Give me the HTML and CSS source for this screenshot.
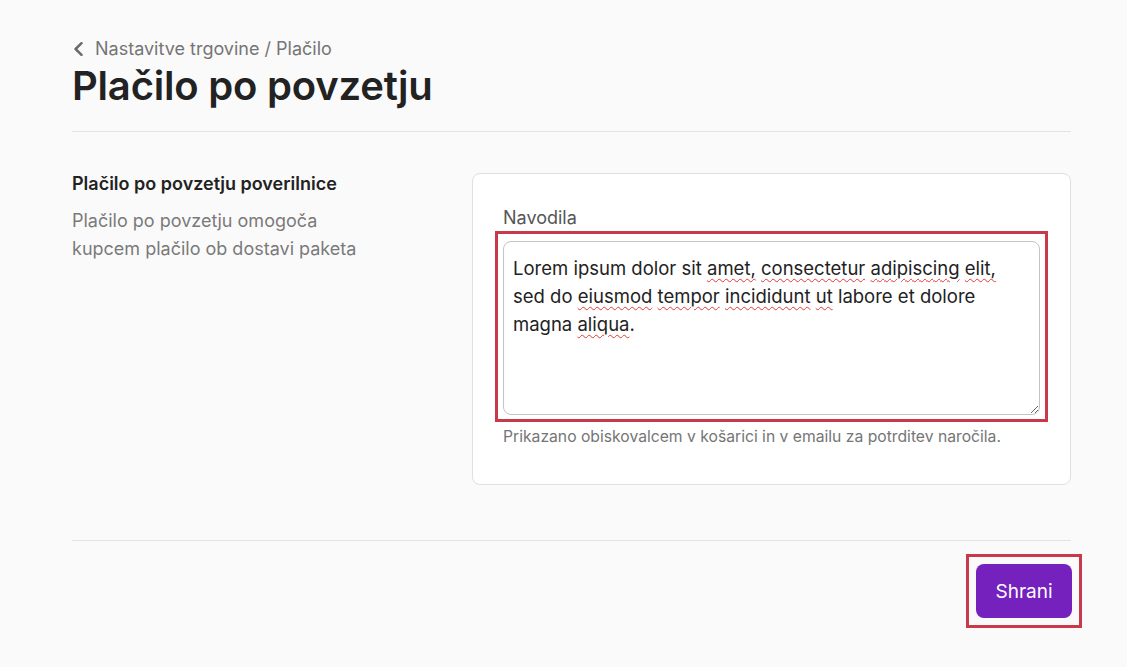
FILE: index.html
```html
<!DOCTYPE html>
<html lang="sl">
<head>
    <meta charset="UTF-8">
    <meta name="viewport" content="width=device-width, initial-scale=1.0">
    <title>Plačilo po povzetju</title>
    <link rel="stylesheet" href="styles.css">
</head>
<body>
    <div class="page">
        <div class="header">
            <a class="breadcrumb" href="#">
                <svg class="chevron" width="11" height="14" viewBox="0 0 11 14"><path d="M8.5 1.2 L2.6 7 L8.5 12.8" fill="none" stroke="#6b6b6b" stroke-width="2.5" stroke-linecap="round" stroke-linejoin="round"/></svg>
                <span>Nastavitve trgovine / Plačilo</span>
            </a>
            <h1 class="title">Plačilo po povzetju</h1>
        </div>

        <div class="section">
            <div class="section-info">
                <h2 class="section-title">Plačilo po povzetju poverilnice</h2>
                <p class="section-desc">Plačilo po povzetju omogoča kupcem plačilo ob dostavi paketa</p>
            </div>
            <div class="card">
                <label class="field-label" for="instructions">Navodila</label>
                <div class="marker">
                    <div class="field-input" id="instructions" role="textbox" contenteditable="true">Lorem ipsum dolor sit <span class="typo">amet,</span> <span class="typo">consectetur</span> <span class="typo">adipiscing</span> <span class="typo">elit,</span> sed do <span class="typo">eiusmod</span> <span class="typo">tempor</span> <span class="typo">incididunt</span> <span class="typo">ut</span> labore et dolore magna <span class="typo">aliqua</span>.</div>
                </div>
                <div class="field-help">Prikazano obiskovalcem v košarici in v emailu za potrditev naročila.</div>
            </div>
        </div>

        <div class="footer">
            <div class="marker marker-btn">
                <button class="save-button">Shrani</button>
            </div>
        </div>
    </div>
</body>
</html>
```

FILE: styles.css
```css
body {
    margin: 0;
    background-color: #fafafa;
    font-family: Inter, "Noto Sans", sans-serif;
    color: #222222;
}
.page {
    width: 999px;
    margin-left: 72px;
    padding-top: 38px;
}
.header {
    padding-bottom: 21px;
    border-bottom: 1px solid #e2e2e2;
}
.breadcrumb {
    display: flex;
    align-items: center;
    gap: 11px;
    color: #757575;
    text-decoration: none;
    font-size: 18px;
    line-height: 22px;
}
.chevron {
    margin-left: 1px;
}
.title {
    margin: 2px 0 0 0;
    font-size: 40px;
    font-weight: 600;
    line-height: 48px;
    color: #222222;
    letter-spacing: -0.2px;
}
.section {
    display: flex;
    justify-content: space-between;
    align-items: flex-start;
    padding: 41px 0 55px 0;
    border-bottom: 1px solid #e2e2e2;
}
.section-info {
    width: 300px;
}
.section-title {
    margin: 0;
    font-size: 18px;
    font-weight: 600;
    line-height: 22px;
    color: #222222;
}
.section-desc {
    margin: 12px 0 0 0;
    font-size: 18px;
    line-height: 28px;
    color: #7a7a7a;
}
.card {
    width: 537px;
    background-color: #ffffff;
    border: 1px solid #e0e0e0;
    border-radius: 8px;
    padding: 33px 30px 38px 30px;
    display: flex;
    flex-direction: column;
}
.field-label {
    font-size: 18px;
    line-height: 22px;
    color: #555555;
    margin-bottom: 2px;
}
.marker {
    border: 3px solid #c8394a;
}
.card .marker {
    margin: 0 -8px;
    padding: 7px 5px 4px 5px;
}
.field-input {
    box-sizing: border-box;
    width: 537px;
    height: 174px;
    border: 1px solid #c4c4c4;
    border-radius: 8px;
    padding: 12px 30px 12px 9px;
    font-size: 18.5px;
    line-height: 28px;
    color: #222222;
    background-color: #ffffff;
    resize: vertical;
    overflow: auto;
    outline: none;
}
.typo {
    text-decoration: underline wavy #e53935;
    text-decoration-thickness: 1px;
    text-underline-offset: 3px;
}
.field-help {
    margin-top: 6px;
    font-size: 15.7px;
    line-height: 18px;
    color: #757575;
}
.footer {
    display: flex;
    justify-content: flex-end;
    padding-top: 13px;
}
.marker-btn {
    padding: 7px;
    margin-right: -11px;
}
.save-button {
    display: block;
    width: 96px;
    height: 54px;
    border: none;
    border-radius: 8px;
    background-color: #7421be;
    color: #ffffff;
    font-family: Inter, "Noto Sans", sans-serif;
    font-size: 19px;
    cursor: pointer;
}
```
